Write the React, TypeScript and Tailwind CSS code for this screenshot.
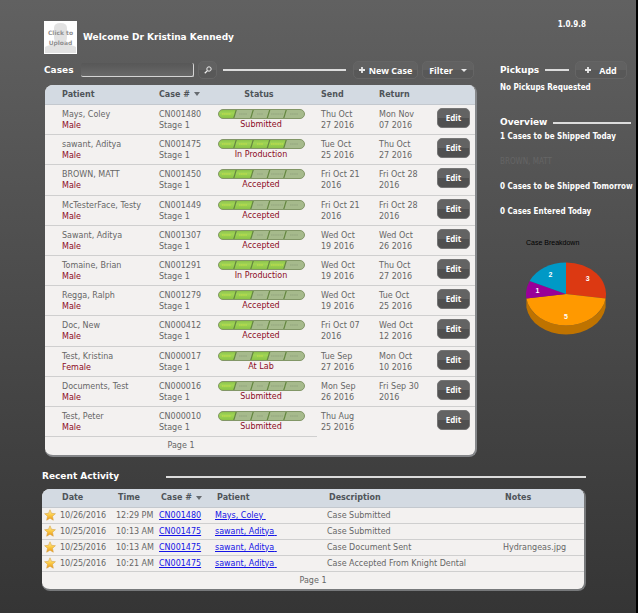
import React, { useState } from 'react';

const cases = [
  { patient: 'Mays, Coley', gender: 'Male', id: 'CN001480', steps: [0], status: 'Submitted', send: 'Thu Oct\n27 2016', back: 'Mon Nov\n07 2016' },
  { patient: 'sawant, Aditya', gender: 'Male', id: 'CN001475', steps: [0, 1, 2, 3], status: 'In Production', send: 'Tue Oct\n25 2016', back: 'Thu Oct\n27 2016' },
  { patient: 'BROWN, MATT', gender: 'Male', id: 'CN001450', steps: [0, 1], status: 'Accepted', send: 'Fri Oct 21\n2016', back: 'Fri Oct 28\n2016' },
  { patient: 'McTesterFace, Testy', gender: 'Male', id: 'CN001449', steps: [0, 1], status: 'Accepted', send: 'Fri Oct 21\n2016', back: 'Fri Oct 28\n2016' },
  { patient: 'Sawant, Aditya', gender: 'Male', id: 'CN001307', steps: [0, 1], status: 'Accepted', send: 'Wed Oct\n19 2016', back: 'Wed Oct\n26 2016' },
  { patient: 'Tomaine, Brian', gender: 'Male', id: 'CN001291', steps: [0, 1, 2, 3], status: 'In Production', send: 'Wed Oct\n19 2016', back: 'Thu Oct\n27 2016' },
  { patient: 'Regga, Ralph', gender: 'Male', id: 'CN001279', steps: [0, 1], status: 'Accepted', send: 'Wed Oct\n19 2016', back: 'Tue Oct\n25 2016' },
  { patient: 'Doc, New', gender: 'Male', id: 'CN000412', steps: [0, 1], status: 'Accepted', send: 'Fri Oct 07\n2016', back: 'Wed Oct\n12 2016' },
  { patient: 'Test, Kristina', gender: 'Female', id: 'CN000017', steps: [0, 2], status: 'At Lab', send: 'Tue Sep\n27 2016', back: 'Mon Oct\n10 2016' },
  { patient: 'Documents, Test', gender: 'Male', id: 'CN000016', steps: [0], status: 'Submitted', send: 'Mon Sep\n26 2016', back: 'Fri Sep 30\n2016' },
  { patient: 'Test, Peter', gender: 'Male', id: 'CN000010', steps: [0], status: 'Submitted', send: 'Thu Aug\n25 2016', back: '' },
];

const activity = [
  { date: '10/26/2016', time: '12:29 PM', id: 'CN001480', patient: 'Mays, Coley', description: 'Case Submitted', notes: '' },
  { date: '10/25/2016', time: '10:13 AM', id: 'CN001475', patient: 'sawant, Aditya', description: 'Case Submitted', notes: '' },
  { date: '10/25/2016', time: '10:13 AM', id: 'CN001475', patient: 'sawant, Aditya', description: 'Case Document Sent', notes: 'Hydrangeas.jpg' },
  { date: '10/25/2016', time: '10:21 AM', id: 'CN001475', patient: 'sawant, Aditya', description: 'Case Accepted From Knight Dental', notes: '' },
];

const segments = [
  { points: '0,0 18.5,0 15.5,10 0,10', dash: 'M4 5h9' },
  { points: '18.5,0 35.5,0 32.5,10 15.5,10', dash: 'M21 5h8' },
  { points: '35.5,0 52,0 49,10 32.5,10', dash: 'M39 5h6' },
  { points: '52,0 68.5,0 65.5,10 49,10', dash: 'M53 5h12' },
  { points: '68.5,0 87,0 87,10 65.5,10', dash: 'M72 5h8' },
];

const Progress = ({ id, steps }: { id: string; steps: number[] }) => (
  <svg className="mx-auto block" width="87" height="10" viewBox="0 0 87 10" aria-hidden="true">
    <defs>
      <clipPath id={`pill-${id}`}>
        <rect x="0.5" y="0.5" width="86" height="9" rx="4.5" />
      </clipPath>
      <linearGradient id={`on-${id}`} x1="0" y1="0" x2="0" y2="1">
        <stop offset="0" stopColor="#86bd48" />
        <stop offset="0.4" stopColor="#a0d455" />
        <stop offset="1" stopColor="#86c043" />
      </linearGradient>
    </defs>
    <g clipPath={`url(#pill-${id})`}>
      {segments.map((s, i) => (
        <g key={i}>
          <polygon points={s.points} fill={steps.includes(i) ? `url(#on-${id})` : '#a6ba8c'} />
          <path d={s.dash} stroke={steps.includes(i) ? '#c9e04a' : '#93a57e'} strokeWidth="1.2" strokeDasharray="1.6 0.5" />
        </g>
      ))}
      <path d="M18.5 0l-3 10M35.5 0l-3 10M52 0l-3 10M68.5 0l-3 10" stroke="#64873f" strokeWidth="1.2" />
    </g>
    <rect x="0.5" y="0.5" width="86" height="9" rx="4.5" fill="none" stroke="#829667" />
  </svg>
);

const SortArrow = () => (
  <svg className="ml-1 inline-block" width="6" height="4" viewBox="0 0 6 4" aria-hidden="true">
    <path d="M0 0h6L3 4z" fill="#666b70" />
  </svg>
);

const Plus = () => (
  <svg width="6" height="6" viewBox="0 0 6 6" aria-hidden="true">
    <path d="M3 0v6M0 3h6" stroke="#e8e8e8" strokeWidth="1.8" />
  </svg>
);

const Star = () => (
  <svg className="mx-auto block" width="12" height="12" viewBox="0 0 12 12" aria-hidden="true">
    <defs>
      <linearGradient id="gold" x1="0" y1="0" x2="0" y2="1">
        <stop offset="0" stopColor="#fff0a8" />
        <stop offset="0.5" stopColor="#fbcb45" />
        <stop offset="1" stopColor="#e8941c" />
      </linearGradient>
    </defs>
    <path d="M6 0.8l1.5 3.5 3.9.4-2.9 2.6.8 3.9L6 9.2l-3.3 2 .8-3.9L.6 4.7l3.9-.4z" fill="url(#gold)" stroke="#d9a544" strokeWidth="0.6" />
  </svg>
);

const Rule = () => <div className="h-[2px] flex-1 bg-[#dcdcdc]" />;

const barButton =
  "flex h-[18px] items-center justify-center rounded-[5px] border border-[#656565] bg-linear-to-b from-[#616161] from-50% to-[#585858] to-50% font-['Open_Sans','Noto_Sans',sans-serif] text-[9px] font-bold text-white";

// 3D pie, angles are clockwise from the top
const slices = [
  { value: 3, color: '#dc3912' },
  { value: 5, color: '#ff9900' },
  { value: 1, color: '#990099' },
  { value: 2, color: '#0099c6' },
];

const PieChart = () => {
  const total = slices.reduce((sum, s) => sum + s.value, 0);
  const point = (v: number, k = 1) => {
    const a = (v / total) * Math.PI * 2;
    return [40 + 40 * k * Math.sin(a), 32 - 31.5 * k * Math.cos(a)];
  };
  let start = 0;
  return (
    <svg className="block" width="80" height="73" viewBox="0 0 80 73" role="img" aria-label="Case Breakdown">
      <path d="M0.4 36.5A40 31.5 0 0 0 79.6 36.5V45.5A40 31.5 0 0 1 0.4 45.5z" fill="#bf7300" />
      {slices.map((s) => {
        const [x1, y1] = point(start);
        const [x2, y2] = point(start + s.value);
        const [tx, ty] = point(start + s.value / 2, 0.72);
        start += s.value;
        return (
          <g key={s.color}>
            <path d={`M40 32L${x1} ${y1}A40 31.5 0 0 1 ${x2} ${y2}z`} fill={s.color} />
            <text x={tx} y={ty + 2} textAnchor="middle" fill="#ffffff" className="font-['Liberation_Sans',sans-serif] text-[7px] font-bold">
              {s.value}
            </text>
          </g>
        );
      })}
    </svg>
  );
};

const App = () => {
  const [search, setSearch] = useState('');

  return (
    <div className="min-h-screen border-r-2 border-black bg-linear-to-b from-[#616161] to-[#353535] pt-[21px] pb-5 pl-[42px] font-['DejaVu_Sans','Liberation_Sans',sans-serif] text-[8px] leading-[11px] text-[#666666]">
      <div className="flex gap-[23px] pl-[2px]">
        <main className="min-w-0 flex-1">
          <div className="flex items-center gap-[6px]">
            <button className="relative size-[33px] overflow-hidden border border-white bg-white">
              <svg className="absolute inset-0" width="31" height="31" viewBox="0 0 31 31" aria-hidden="true">
                <path d="M9 6q0-5 6.500-5T22 6v9q0 5-3 7 9 1 12 3v6H0v-6q3-2 12-3-3-2-3-7z" fill="#e2e2e2" />
              </svg>
              <span className="relative block text-[6px] leading-[10px] font-bold text-[#919191]">
                Click to<br />Upload
              </span>
            </button>
            <h1 className="text-[9px] font-bold text-white">Welcome Dr Kristina Kennedy</h1>
          </div>

          <div className="mt-[6px] flex h-5 items-center">
            <h2 className="w-[37px] text-[9px] font-bold text-white">Cases</h2>
            <input
              type="text"
              aria-label="Search cases"
              value={search}
              onChange={(e) => setSearch(e.target.value)}
              className="h-[14px] w-[113px] rounded-[2px] border-r border-b border-[#d5d5d5] bg-linear-to-b from-[#575757] to-[#696969] px-1 text-white"
            />
            <button aria-label="Search" className={`${barButton} ml-1 w-[19px]`}>
              <svg width="8" height="8" viewBox="0 0 8 8" aria-hidden="true">
                <circle cx="5" cy="3" r="2.2" fill="none" stroke="#eeeeee" />
                <path d="M3.4 4.6L0.8 7.2" stroke="#eeeeee" strokeWidth="1.3" />
              </svg>
            </button>
            <div className="mr-[7px] ml-[6px] flex flex-1">
              <Rule />
            </div>
            <button className={`${barButton} w-[65px] gap-1`}>
              <Plus />
              New Case
            </button>
            <button className={`${barButton} mr-[3px] ml-1 w-[52px] gap-2`}>
              Filter
              <svg width="6" height="3" viewBox="0 0 6 3" aria-hidden="true">
                <path d="M0 0h6L3 3z" fill="#e8e8e8" />
              </svg>
            </button>
          </div>

          <div className="mt-[5px] ml-px overflow-hidden rounded-lg border-r-2 border-b-2 border-[#85878a] bg-[#f3f1f0]">
            <table className="w-full table-fixed border-collapse text-left">
              <colgroup>
                <col />
                <col className="w-[50px]" />
                <col className="w-[112px]" />
                <col className="w-[58px]" />
                <col className="w-[58px]" />
                <col className="w-[42px]" />
              </colgroup>
              <thead>
                <tr className="h-[19px] border-b border-[#c3c8ce] bg-[#d3dae2] text-[#4f5459]">
                  <th className="pl-[17px]">Patient</th>
                  <th className="pl-1 whitespace-nowrap">Case #<SortArrow /></th>
                  <th className="pr-1 text-center">Status</th>
                  <th className="pl-1">Send</th>
                  <th className="pl-1">Return</th>
                  <th aria-label="Actions"></th>
                </tr>
              </thead>
              <tbody>
                {cases.map((c) => (
                  <tr key={c.id} className="h-[30px] border-b border-[#cfcfcf] align-top last:border-b-0 nth-[5n+3]:h-[31px]">
                    <td className="pt-1 pl-[17px]">
                      {c.patient}
                      <div className="text-[#8b0a24]">{c.gender}</div>
                    </td>
                    <td className="pt-1 pl-1 whitespace-nowrap">{c.id}<br />Stage 1</td>
                    <td className="pt-1 text-center text-[#8b0a24]">
                      <Progress id={c.id} steps={c.steps} />
                      {c.status}
                    </td>
                    <td className="pt-1 pl-1 whitespace-pre-line">{c.send}</td>
                    <td className="pt-1 pl-1 whitespace-pre-line">{c.back}</td>
                    <td className="pt-[3px] pl-1">
                      <button className="block h-5 w-[33px] rounded-[5px] border border-[#757575] bg-linear-to-b from-[#636363] from-50% to-[#505050] to-50% font-['Open_Sans','Noto_Sans',sans-serif] text-[8px] font-bold text-white">
                        Edit
                      </button>
                    </td>
                  </tr>
                ))}
              </tbody>
              <tfoot>
                <tr className="h-[19px]">
                  <td colSpan={3} className="border-t border-[#cfcfcf] text-center">Page 1</td>
                  <td colSpan={3}></td>
                </tr>
              </tfoot>
            </table>
          </div>
        </main>

        <aside className="mr-[5px] w-[131px] font-['DejaVu_Sans_Condensed','DejaVu_Sans',sans-serif] font-bold text-white">
          <div className="mt-[-2px] mr-[45px] mb-[30px] text-right">1.0.9.8</div>
          <div className="flex h-5 items-center gap-[6px] pr-1">
            <h2 className="font-['DejaVu_Sans',sans-serif] text-[9px]">Pickups</h2>
            <Rule />
            <button className={`${barButton} w-[52px] gap-2`}>
              <Plus />
              Add
            </button>
          </div>
          <p className="mt-[2px]">No Pickups Requested</p>
          <div className="mt-6 flex items-center gap-[6px]">
            <h2 className="font-['DejaVu_Sans',sans-serif] text-[9px]">Overview</h2>
            <Rule />
          </div>
          <div className="mt-[3px] flex flex-col gap-[14px] whitespace-nowrap">
            <p>1 Cases to be Shipped Today</p>
            <p className="font-normal text-[#656565]">BROWN, MATT</p>
            <p>0 Cases to be Shipped Tomorrow</p>
            <p>0 Cases Entered Today</p>
          </div>
          <div className="mt-5 pl-[26px]">
            <h3 className="mb-[14px] font-['Liberation_Sans',sans-serif] text-[7px] font-normal text-black">Case Breakdown</h3>
            <PieChart />
          </div>
        </aside>
      </div>

      <section className="mt-[14px] mr-[50px]">
        <div className="flex items-center">
          <h2 className="w-[124px] text-[9px] font-bold text-white">Recent Activity</h2>
          <Rule />
        </div>
        <div className="mt-[7px] overflow-hidden rounded-lg border-r-2 border-b-2 border-[#77797b] bg-[#f3f1f0]">
          <table className="w-full table-fixed border-collapse text-left">
            <colgroup>
              <col className="w-4" />
              <col className="w-[54px]" />
              <col className="w-[43px]" />
              <col className="w-[56px]" />
              <col className="w-[112px]" />
              <col />
              <col className="w-[85px]" />
            </colgroup>
            <thead>
              <tr className="h-[18px] border-b border-[#c3c8ce] bg-[#d3dae2] text-[#4f5459]">
                <th aria-label="Starred"></th>
                <th className="pl-1">Date</th>
                <th className="pl-[6px]">Time</th>
                <th className="pl-[6px] whitespace-nowrap">Case #<SortArrow /></th>
                <th className="pl-[6px]">Patient</th>
                <th className="pl-[6px]">Description</th>
                <th className="pl-[6px]">Notes</th>
              </tr>
            </thead>
            <tbody>
              {activity.map((a, i) => (
                <tr key={i} className="h-4 border-b border-[#cfcfcf]">
                  <td><Star /></td>
                  <td className="pl-[2px]">{a.date}</td>
                  <td className="pl-1 whitespace-nowrap">{a.time}</td>
                  <td className="pl-1"><a href="#" className="text-[#1414e6] underline">{a.id}</a></td>
                  <td className="pl-1"><a href="#" className="text-[#1414e6] underline">{a.patient}&nbsp;</a></td>
                  <td className="pl-1">{a.description}</td>
                  <td className="pl-1">{a.notes}</td>
                </tr>
              ))}
            </tbody>
            <tfoot>
              <tr className="h-[18px]">
                <td colSpan={7} className="text-center">Page 1</td>
              </tr>
            </tfoot>
          </table>
        </div>
      </section>
    </div>
  );
};

export default App;
